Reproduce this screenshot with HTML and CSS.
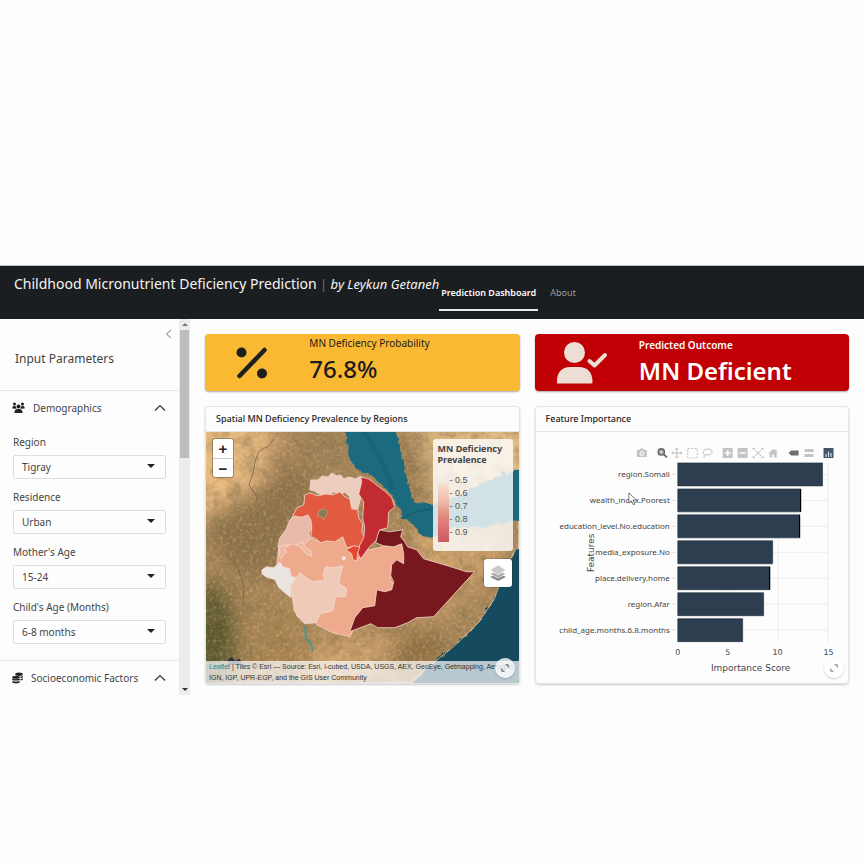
FILE: index.html
```html
<!DOCTYPE html>
<html lang="en">
<head>
<meta charset="utf-8">
<title>Childhood Micronutrient Deficiency Prediction</title>
<link rel="stylesheet" href="styles.css">
</head>
<body>
<div class="app">
  <header class="navbar">
    <h1 class="brand">Childhood Micronutrient Deficiency Prediction <span class="bar">|</span> <em>by Leykun Getaneh</em></h1>
    <nav class="tabs">
      <a href="#dashboard" class="tab active">Prediction Dashboard</a>
      <a href="#about" class="tab">About</a>
    </nav>
  </header>
  <div class="layout">
    <aside class="sidebar">
      <div class="panel">
        <div class="panel-head">
          <button class="collapse" aria-label="Toggle sidebar"><svg width="8" height="10" viewBox="0 0 8 10"><path d="M6 1 1.500 5 6 9" fill="none" stroke="#777"/></svg></button>
          <h2>Input Parameters</h2>
        </div>
        <section class="group">
          <button class="group-head" aria-expanded="true">
            <svg class="gicon" width="13" height="12" viewBox="0 0 13 12"><g fill="#222"><circle cx="2.500" cy="2" r="1.500"/><circle cx="10.500" cy="2" r="1.500"/><circle cx="6.500" cy="4.500" r="2"/><path d="M.3 6.500C.3 4.500 1 4 2.400 4c.9 0 1.300.2 1.600.5 0 1 .2 1.500.8 2.200zM12.700 6.500c0-2-.7-2.500-2.100-2.500-.9 0-1.300.2-1.600.5 0 1-.2 1.500-.8 2.200zM2.500 11c0-3 .9-4 4-4s4 1 4 4z"/></g></svg>
            <span>Demographics</span>
            <svg class="chev" width="12" height="8" viewBox="0 0 12 8"><path d="M1 6.500 6 1.500l5 5" fill="none" stroke="#333" stroke-width="1.200"/></svg>
          </button>
          <div class="fields">
            <div class="field"><label for="region">Region</label><div class="pick"><select id="region"><option>Tigray</option></select></div></div>
            <div class="field"><label for="res">Residence</label><div class="pick"><select id="res"><option>Urban</option></select></div></div>
            <div class="field"><label for="mage">Mother's Age</label><div class="pick"><select id="mage"><option>15-24</option></select></div></div>
            <div class="field"><label for="cage">Child's Age (Months)</label><div class="pick"><select id="cage"><option>6-8 months</option></select></div></div>
          </div>
        </section>
        <section class="group">
          <button class="group-head" aria-expanded="true">
            <svg class="gicon" width="11" height="12" viewBox="0 0 11 12"><g fill="#222"><ellipse cx="7" cy="2.200" rx="3.800" ry="1.700"/><path d="M8.500 4.600c1 0 2-.4 2.300-1v1.600c-.3.500-1.200.9-2.300 1zM8.500 7c1 0 2-.4 2.300-1v1.400c-.3.500-1.200.9-2.300 1z"/><ellipse cx="4" cy="5.200" rx="3.800" ry="1.500"/><path d="M.2 6.300c1.600 1.200 6 1.200 7.600 0v1.400c-1.600 1.200-6 1.200-7.600 0zM.2 8.700c1.600 1.200 6 1.200 7.600 0v1.500c-1.600 1.600-6 1.600-7.600 0z"/></g></svg>
            <span>Socioeconomic Factors</span>
            <svg class="chev" width="12" height="8" viewBox="0 0 12 8"><path d="M1 6.500 6 1.500l5 5" fill="none" stroke="#333" stroke-width="1.200"/></svg>
          </button>
        </section>
      </div>
      <div class="scroll" aria-hidden="true"><i class="up"></i><i class="thumb"></i><i class="down"></i></div>
    </aside>
    <main class="main">
      <section class="value amber">
        <div class="vicon"><svg width="34" height="34" viewBox="0 0 34 34"><g fill="#1d1f21"><circle cx="6.500" cy="6.500" r="5"/><circle cx="27" cy="27.500" r="5"/></g><path d="M4.500 30 29.500 4" stroke="#1d1f21" stroke-width="4.500" stroke-linecap="round"/></svg></div>
        <div class="vtext"><p class="vlabel">MN Deficiency Probability</p><p class="vnum">76.8%</p></div>
      </section>
      <section class="value red">
        <div class="vicon"><svg width="52" height="42" viewBox="0 0 52 42"><g fill="#ecddd5"><circle cx="18.500" cy="10.500" r="10.500"/><path d="M1 41.500C.3 30 6 25 14 25h9c8 0 13.700 5 13.500 15 0 1-.5 1.500-1.500 1.500z"/></g><path d="m33.500 19 5 4.500L49 13" fill="none" stroke="#ecddd5" stroke-width="4" stroke-linecap="round" stroke-linejoin="round"/></svg></div>
        <div class="vtext"><p class="vlabel">Predicted Outcome</p><p class="vnum">MN Deficient</p></div>
      </section>
      <section class="card">
        <h3>Spatial MN Deficiency Prevalence by Regions</h3>
        <div class="map">
          <svg class="tiles" viewBox="206 432 313 251" preserveAspectRatio="xMidYMid slice" role="img" aria-label="Map of Ethiopia by region">
            <defs>
              <filter id="soft" x="-30%" y="-30%" width="160%" height="160%"><feGaussianBlur stdDeviation="11"/></filter>
              <filter id="grain" x="0" y="0" width="100%" height="100%"><feTurbulence type="fractalNoise" baseFrequency=".07 .08" numOctaves="5" seed="8"/><feColorMatrix values="0 0 0 0 .25  0 0 0 0 .17  0 0 0 0 .07  1.800 1.800 0 0 -1.550"/></filter>
              <filter id="fine" x="0" y="0" width="100%" height="100%"><feTurbulence type="fractalNoise" baseFrequency=".3" numOctaves="3" seed="4"/><feColorMatrix values="0 0 0 0 1  0 0 0 0 .85  0 0 0 0 .6  2 2 0 0 -1.900"/></filter>
              <filter id="rough" x="-5%" y="-5%" width="110%" height="110%"><feTurbulence type="fractalNoise" baseFrequency=".16" numOctaves="2" seed="3" result="n"/><feDisplacementMap in="SourceGraphic" in2="n" scale="6" xChannelSelector="R" yChannelSelector="G"/></filter>
            </defs>
            <path fill="#aa8658" d="M206 432h313v251H206z"/>
            <g filter="url(#soft)">
              <path fill="#e6b87e" d="M180 410h108l-20 40-10 50-25 20h-50z"/>
              <path fill="#8d7049" d="M255 490l40-30 20 30-25 60-20 30-40-10-30-50z"/>
              <path fill="#9e8056" d="M290 425h60l10 50-50-5z"/>
              <path fill="#565529" d="M195 580l30 10 12 40-5 60h-40z"/>
              <path fill="#a8834f" d="M255 590l40 30 20 60h-65z"/>
              <path fill="#cda06a" d="M310 640l100-5 75-60 25-30-80-40-20 40 10 80-60 60h-50z"/>
              <path fill="#8a693b" d="M395 640l45-10 5 25-50 20z"/>
              <path fill="#e2bb82" d="M420 420h120v60l-70 10-50 5z"/>
              <path fill="#8c704a" d="M404 440l22 5 2 50-14 10z"/>
            </g>
            <path filter="url(#grain)" opacity=".5" d="M206 432h313v251H206z"/>
            <path filter="url(#fine)" opacity=".22" d="M206 432h313v251H206z"/>
            <path d="M274 439l-5 7-10 5-4 11-2 12-4 11 7 10 2 7" fill="none" stroke="#786347" stroke-width=".8"/>
            <g filter="url(#rough)">
              <path fill="#1f6b7e" d="M345 425h50l6 25 6 27 7 26 20 1 30-10 16-10 23-10 26-7v50l-43 10h-34l-10 8-11 3-9-2-10-13-11-4 1-8-12-17-17-18-16-7-8-12z"/>
              <path fill="#134c5e" d="M530 543l-14 8-12 23-9 25-16 24-25 24-20 16-24 24h120z"/>
            </g>
            <path d="M362 428l18 30 14 32" stroke="#14536b" stroke-width="5" fill="none" opacity=".3"/>
            <path d="M404 518l12-6 20-4" stroke="#14536b" stroke-width="2" fill="none" opacity=".5"/>
            <path d="M516 550l-12 23-9 26-16 24-25 24-20 16-24 20" fill="none" stroke="#e8cda4" opacity=".75"/>
            <path d="M305 626l1 12 6 8 1 6" fill="none" stroke="#4f958b" stroke-width="2"/>
            <path d="M226 553l12 15 6 18-1 20" fill="none" stroke="#4b6734" opacity=".6"/>
            <path d="M228 660l4-3 3 4 5-2 2 6h-14z" fill="#293142"/>
            <g stroke="#f4d8cd" stroke-width=".8" stroke-linejoin="round">
              <path fill="#efa98d" d="M311 538l9 4 23-5 12 9 2 13 8-8 27-6 11-4 3 10-2 17-7-4-5 5-1 11 3 5-2 9-7 1-8-2-2 17-13 5-12 22-17-4-16-8-25-28-15-33 2-18 20-9z"/>
              <path fill="#ecccbd" d="M311 480l7 0 4-4 6 1 4-4 5 3 4-1 3 4 6-2 6 2 5-3v22l-3 11-6-1-2-11-5-5-4 2-7-2-4 3-5-1-4 1-7-4-4-1z"/>
              <path fill="#e25b40" d="M310 493l8 3 8-2 7 1 7-3 5 5 5 2 2 10 6 1 1 8 4 6-1 8 3 6-2 10-1 10-6-1-1-11-8 2-4-11-8 5-8-1-6 2-6-5-4-1 1-8-4-7-6-5-10 1 5-10 7-3 1-10z"/>
              <path fill="#e9b9aa" d="M295 516l6 2 7-3 3 5 1 8-3 5 1 6-6 6-6 1-5-2-9 4-6-1 2-9 6-8 4-10z"/>
              <path fill="#efb9a3" d="M297 545l6-3 2 5 6 4 1 6-6-3-4-5zM279 555l1-8 9-3-4 5 2 3-6 7z"/>
              <path fill="#c22b31" d="M361 477l8 2 9 7 8 6 6 6 3 9-6 5-1 16-8 2-3 10-8 8-8 11-4-8 7-13 1-10-2-10 1-16-5-8 3-12z"/>
              <path fill="#e4482e" d="M354 546l6 1-2 6-1 8-4-1-1-6-6-4z"/>
              <path fill="#76181d" d="M380 530l10 2 13-2-2 7 4 5 3 5 9 3 7 9 24 7 19 6h8l-41 45-17 1-9 5-13 5-17 0-7-4-21 8 5-14 8-10 12-2 2-16 8 2 7-2 2-8-3-6 1-11 5-5 7 4v-10l-2-10-8 3-10-1-8-3 2-8z"/>
              <path fill="#efcab8" d="M294 607l-2-11-2-10 7-8 3-5 8 6 6 3 11-2-2-6 3-7 8 1 9-2-2 8-2 9 8 6-1 8-10 0-3 14-12 3-5 9-11 1-8-8-3-7z"/>
              <path fill="#ebe5e2" d="M262 574l0-4 5-3 7 1 6-6 3 5 7 2 1 7 5 2-6 9 1 11-12-10-4-8-9-3z"/>
            </g>
            <circle cx="344" cy="558.500" r="2" fill="#f3e6df"/>
            <path d="M319 511l5-2 4 3-2 4-2 4-2-3-4-1z" fill="#867c50" stroke="#b7ab7a" stroke-width=".7"/>
          </svg>
          <div class="zoomer"><button aria-label="Zoom in">+</button><button aria-label="Zoom out">−</button></div>
          <div class="legend">
            <strong>MN Deficiency Prevalence</strong>
            <div class="scale"><span class="ramp"></span><ul><li>0.5</li><li>0.6</li><li>0.7</li><li>0.8</li><li>0.9</li></ul></div>
          </div>
          <button class="layers" aria-label="Layers"><svg width="18" height="18" viewBox="0 0 18 18"><path d="M9 9.500 1 13l8 4 8-4z" fill="#8b8b8b"/><path d="M9 6.500 1 10l8 4 8-4z" fill="#aaa" stroke="#fff" stroke-width=".6"/><path d="M9 1 1 6l8 5 8-5z" fill="#c9c9c9" stroke="#fff" stroke-width=".6"/></svg></button>
          <p class="credit"><a href="#leaflet">Leaflet</a> | Tiles © Esri — Source: Esri, i-cubed, USDA, USGS, AEX, GeoEye, Getmapping, Aerogrid, IGN, IGP, UPR-EGP, and the GIS User Community</p>
        </div>
        <button class="expand" aria-label="Expand"><svg width="8" height="8" viewBox="0 0 8 8"><path d="M4.500.8h2.700v2.700M3.500 7.200H.8V4.500" fill="none" stroke="#555"/></svg></button>
      </section>
      <section class="card">
        <h3>Feature Importance</h3>
        <svg class="chart" viewBox="536 432 313 251" role="img" aria-label="Feature importance bar chart">
          <g fill="#c4c4c4" stroke="none">
            <path d="M637 450h2.500l1-1.500h3l1 1.500h2.500v7h-10z"/><circle cx="642" cy="453.500" r="2.300" fill="#fff"/><circle cx="642" cy="453.500" r="1.200"/>
            <path d="M723 448h10v10h-10zM738 448h10v10h-10z"/>
            <path d="M768.500 453.500l5-4.500 2 1.800v-1.300h1.500v2.700l1.500 1.300h-1.500v4h-2.500v-3h-2v3H770v-4z"/>
            <path d="M805 449h9v3h-9zM805 454h9v3h-9z"/>
          </g>
          <path d="M725 453h6M728 450v6M740 453h6" stroke="#fff" stroke-width="1.500"/>
          <path d="M789 453l2.500-2.500h7.500v5h-7.500z" fill="#6f6f6f"/>
          <g fill="none" stroke="#bbb">
            <path d="M672 453h10M677 448v10M675.500 449.500l1.500-1.500 1.500 1.500M675.500 456.500l1.500 1.500 1.500-1.500M673.500 451.500L672 453l1.500 1.500M680.500 451.500l1.500 1.500-1.500 1.500"/>
            <path d="M688 448.500h9.500v9.500H688z" stroke-dasharray="2 1.500"/>
            <path d="M705 455c-3-2-1.500-6 3-6s6 4 2.500 5.500c-2 1-4-.5-5.500.5s0 1.500-.5 3"/>
            <path d="M755.500 450l6 6M761.500 450l-6 6M753.500 450v-1.500h2M763.500 450v-1.500h-2M753.500 456v1.500h2M763.500 456v1.500h-2"/>
          </g>
          <circle cx="661.500" cy="452" r="3.200" fill="#999" stroke="#666" stroke-width="1.300"/><path d="M664 454.500l3 3" stroke="#666" stroke-width="1.700"/><path d="M660 452h3M661.500 450.500v3" stroke="#fff" stroke-width=".7"/>
          <path fill="#44566a" d="M824 448h10v10h-10z"/><path d="M826.500 457v-3M829 457v-5.500M831.500 457v-4" stroke="#dde" stroke-width="1.200"/>
          <path d="M728.500 462v181M778.500 462v181M828.500 462v181M678 474.500h151M678 500.500h151M678 526.500h151M678 552.500h151M678 578.500h151M678 604.500h151M678 630.500h151" stroke="#ededed" fill="none"/>
          <path d="M672 474.500h4M672 500.500h4M672 526.500h4M672 552.500h4M672 578.500h4M672 604.500h4M672 630.500h4" stroke="#ddd"/>
          <g fill="#2c3e50" stroke="#1f2b38" stroke-width=".6">
            <path d="M678 463h145v23H678zM678 489h123v23H678zM678 515h122v23H678zM678 541h95v23h-95zM678 567h92v23h-92zM678 593h86v23h-86zM678 619h65v23h-65z"/>
          </g>
          <path d="M801 489v23M800 515v23M770 567v23" stroke="#000" stroke-width="1.200"/>
          <g class="ylab"><text x="670" y="477">region.Somali</text><text x="670" y="503">wealth_index.Poorest</text><text x="670" y="529">education_level.No.education</text><text x="670" y="555">media_exposure.No</text><text x="670" y="581">place.delivery.home</text><text x="670" y="607">region.Afar</text><text x="670" y="633">child_age.months.6.8.months</text></g>
          <g class="xlab"><text x="678" y="655">0</text><text x="728" y="655">5</text><text x="778" y="655">10</text><text x="829" y="655">15</text></g>
          <text class="axis" x="751" y="671">Importance Score</text>
          <text class="axis" transform="translate(594 553) rotate(-90)">Features</text>
          <path d="M629 493v10l2.500-2 2 4 1.500-.7-1.800-4 3.300-.3z" fill="#fff" stroke="#555" stroke-width=".8"/>
        </svg>
        <button class="expand" aria-label="Expand"><svg width="8" height="8" viewBox="0 0 8 8"><path d="M4.500.8h2.700v2.700M3.500 7.200H.8V4.500" fill="none" stroke="#777"/></svg></button>
      </section>
    </main>
  </div>
</div>
</body>
</html>
```
FILE: styles.css
```css
* { box-sizing: border-box; }
body {
  margin: 0;
  background: #fdfdfd;
  color: #444;
  font-family: "Noto Sans", "Open Sans", sans-serif;
  font-size: 10px;
  line-height: 18px;
}
h1, h2, h3, p, ul { margin: 0; padding: 0; font-weight: 400; }
button { font: inherit; color: inherit; border: 0; background: none; padding: 0; }
svg { display: block; }
.app { padding-top: 265px; }

.navbar {
  display: flex;
  height: 54px;
  border-top: 1px solid #b9c5c6;
  background: #1b1e20;
  padding-left: 14px;
  color: #f4f4f4;
}
.brand { font-size: 14px; line-height: 20px; padding-top: 8px; white-space: nowrap; }
.brand em { font-size: 13px; }
.bar { color: #777; font-size: 12px; }
.tabs { display: flex; gap: 10px; height: 45px; }
.tab {
  color: #9a9c9d;
  text-decoration: none;
  font-size: 9px;
  padding: 18px 2px 0;
  border-bottom: 2px solid transparent;
  white-space: nowrap;
}
.tab.active { color: #fff; font-weight: 600; border-color: #e9e9e9; }

.layout { display: flex; }
.sidebar { display: flex; flex: 0 0 190px; }
.panel { flex: 1; }
.panel-head { height: 72px; border-bottom: 1px solid #e6e6e6; padding: 10px 6px 0 15px; }
.collapse { display: block; margin-left: auto; }
h2 { font-size: 12px; line-height: 20px; padding-top: 10px; }
.group { border-bottom: 1px solid #e6e6e6; }
.group:last-child { border: 0; }
.group-head { display: flex; align-items: center; width: 100%; height: 34px; padding: 0 13px 0 12px; text-align: left; }
.gicon { margin-right: 8px; }
.chev { margin-left: auto; }
.fields { display: grid; gap: 9px; padding: 8px 13px 16px; }
.field label { display: block; margin-bottom: 4px; }
.pick { position: relative; }
.pick::after { content: ""; position: absolute; right: 11px; top: 9px; border: 4px solid transparent; border-top-color: #222; border-bottom: 0; }
select {
  appearance: none;
  display: block;
  width: 100%;
  height: 24px;
  padding: 0 8px;
  border: 1px solid #dedede;
  border-radius: 2px;
  background: #fefefe;
  color: #444;
  font: inherit;
}
.scroll { display: flex; flex-direction: column; align-items: center; width: 11px; background: #ececec; padding: 4px 0; }
.scroll i { display: block; border: 3px solid transparent; }
.scroll .up { border-bottom-color: #777; border-top: 0; }
.scroll .down { border-top-color: #333; border-bottom: 0; margin-top: auto; }
.scroll .thumb { border: 0; width: 9px; height: 128px; margin-top: 4px; background: #bdbdbd; }

.main {
  flex: 1;
  display: grid;
  grid-template-columns: minmax(0, 1fr) minmax(0, 1fr);
  gap: 15px;
  align-content: start;
  padding: 15px 15px 0;
}
.value { display: flex; height: 57px; border-radius: 4px; box-shadow: 0 1px 2px #0005; }
.vicon { flex: 0 0 30%; display: flex; align-items: center; justify-content: center; }
.vtext { padding-left: 10px; white-space: nowrap; }
.vlabel { font-size: 10px; line-height: 18px; }
.vnum { font-size: 24px; line-height: 34px; font-weight: 500; }
.amber { background: #f9b932; color: #1b1b1b; }
.red { background: #c10005; color: #fff; }
.red .vtext { padding-top: 2px; }
.red .vlabel, .red .vnum { font-weight: 600; }

.card { position: relative; border: 1px solid #e4e4e4; border-radius: 4px; overflow: hidden; box-shadow: 0 1px 2px #0003; }
h3 { font-size: 9px; line-height: 24px; font-weight: 500; color: #222; padding: 0 10px; border-bottom: 1px solid #e6e6e6; white-space: nowrap; }
.map { position: relative; }
.tiles, .chart { width: 100%; height: auto; }
.zoomer { position: absolute; left: 7px; top: 7px; width: 20px; background: #fff; border-radius: 2px; box-shadow: 0 0 0 1px #0004; }
.zoomer button { display: block; width: 100%; height: 19px; font: 700 15px/19px "Liberation Sans", sans-serif; color: #222; }
.zoomer button + button { border-top: 1px solid #ccc; }
.legend { position: absolute; right: 6px; top: 7px; width: 80px; height: 112px; padding: 4px 0 0 5px; border-radius: 3px; background: #fffc; font: 9px/11px "Liberation Sans", sans-serif; color: #555; }
.legend strong { display: block; color: #444; font-family: "Noto Sans", sans-serif; font-weight: 700; }
.scale { display: flex; gap: 1px; padding-top: 9px; }
.ramp { width: 11px; height: 58px; margin-top: 10px; background: linear-gradient(#f6ded1, #eebbaa 30%, #e18c80 55%, #d86c6e 80%, #ca5c63); }
.legend ul { list-style: none; line-height: 13px; }
.legend li::before { content: "- "; }
.layers { position: absolute; right: 7px; top: 127px; width: 28px; height: 28px; display: grid; place-items: center; background: #fff; border-radius: 3px; box-shadow: 0 0 0 1px #0002; }
.credit { position: absolute; left: 0; right: 0; bottom: 0; padding: 0 3px; background: #ffffffb3; font: 7px/11px "Liberation Sans", sans-serif; color: #333; }
.credit a { color: #27809a; text-decoration: none; }
.expand { position: absolute; right: 4px; bottom: 5px; width: 20px; height: 20px; border-radius: 50%; display: grid; place-items: center; background: #fffffff0; box-shadow: 0 1px 2px #0003; }
.map + .expand { background: #ffffffc8; }
.chart text { font-family: "DejaVu Sans", sans-serif; fill: #444; }
.chart .ylab text { font-family: "Noto Sans", sans-serif; font-size: 8px; text-anchor: end; }
.xlab text { font-size: 8px; text-anchor: middle; }
.chart .axis { font-size: 9px; text-anchor: middle; }
```
